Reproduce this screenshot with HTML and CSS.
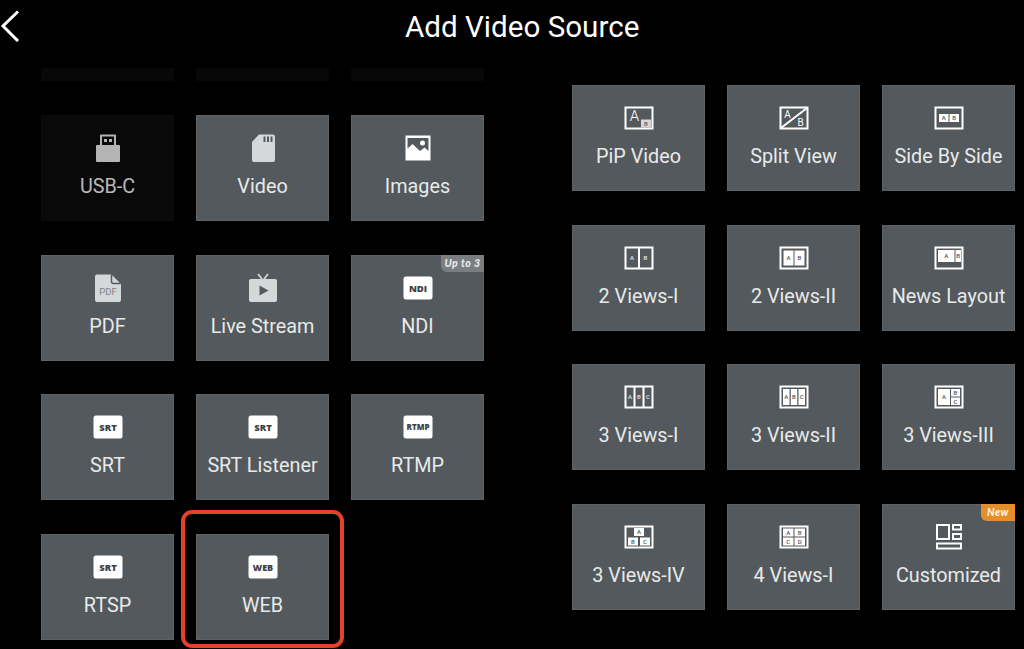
FILE: index.html
```html
<!DOCTYPE html>
<html lang="en">
<head>
<meta charset="utf-8">
<title>Add Video Source</title>
<link rel="stylesheet" href="styles.css">
</head>
<body>
<header class="top">
  <svg class="back" viewBox="0 0 20 42" aria-hidden="true"><path d="M18 11.500 3 26l15 15"/></svg>
  <h1 class="title">Add Video Source</h1>
</header>
<main class="panels">
  <section class="grid sources">
    <div class="strip"></div><div class="strip"></div><div class="strip"></div>

    <div class="card off">
      <svg class="ico" viewBox="0 0 32 30"><path class="dim" fill-rule="evenodd" d="M8 2.500a1 1 0 0 1 1-1h14a1 1 0 0 1 1 1V12h3a1 1 0 0 1 1 1v15a1 1 0 0 1-1 1H5a1 1 0 0 1-1-1V13a1 1 0 0 1 1-1h3zM10 3.500V12h12V3.500zM12 6h3v3h-3zM17 6h3v3h-3z"/></svg>
      <span class="label">USB-C</span>
    </div>
    <div class="card">
      <svg class="ico" viewBox="0 0 32 30"><path class="pale" fill-rule="evenodd" d="M12 1.500h14a2 2 0 0 1 2 2V27a2 2 0 0 1-2 2H7a2 2 0 0 1-2-2V9zM16.500 3.500v5.500h2V3.500zM20 3.500v5.500h2V3.500zM23.500 3.500v5.500h2V3.500z"/></svg>
      <span class="label">Video</span>
    </div>
    <div class="card">
      <svg class="ico" viewBox="0 0 32 30"><path class="solid" fill-rule="evenodd" d="M3.500 2.500h25v25h-25zM5.500 5v10.500l5-4.500 7.500 7 4.500-3.500 4 3.500V5z"/><circle class="solid" cx="20.500" cy="10" r="2.500"/></svg>
      <span class="label">Images</span>
    </div>

    <div class="card">
      <svg class="ico" viewBox="0 0 32 30"><path class="pale" d="M5 1.500h14.500L29 11v16a2 2 0 0 1-2 2H5a2 2 0 0 1-2-2V3.500a2 2 0 0 1 2-2z"/><path class="cut" d="M19.500 1.500v7a2 2 0 0 0 2 2h7"/><text class="glyph pdf" x="16" y="21.500">PDF</text></svg>
      <span class="label">PDF</span>
    </div>
    <div class="card">
      <svg class="ico" viewBox="0 0 32 30"><path class="pale" d="M4 6h24a2 2 0 0 1 2 2v19a2 2 0 0 1-2 2H4a2 2 0 0 1-2-2V8a2 2 0 0 1 2-2z"/><path class="ears" d="M11 1l4 5M21 1l-4 5"/><path class="play" d="M12.500 12.500v10l9-5z"/></svg>
      <span class="label">Live Stream</span>
    </div>
    <div class="card">
      <span class="badge grey">Up to 3</span>
      <svg class="ico" viewBox="0 0 32 30"><rect class="solid" x="1.500" y="3.500" width="29" height="23" rx="2.500"/><text class="glyph tag" x="16" y="18.500">NDI</text></svg>
      <span class="label">NDI</span>
    </div>

    <div class="card">
      <svg class="ico" viewBox="0 0 32 30"><rect class="solid" x="1.500" y="3.500" width="29" height="23" rx="2.500"/><text class="glyph tag" x="16" y="18.500">SRT</text></svg>
      <span class="label">SRT</span>
    </div>
    <div class="card">
      <svg class="ico" viewBox="0 0 32 30"><rect class="solid" x="1.500" y="3.500" width="29" height="23" rx="2.500"/><text class="glyph tag" x="16" y="18.500">SRT</text></svg>
      <span class="label">SRT Listener</span>
    </div>
    <div class="card">
      <svg class="ico" viewBox="0 0 32 30"><rect class="solid" x="1.500" y="3.500" width="29" height="23" rx="2.500"/><text class="glyph tag wide" x="16" y="18">RTMP</text></svg>
      <span class="label">RTMP</span>
    </div>

    <div class="card">
      <svg class="ico" viewBox="0 0 32 30"><rect class="solid" x="1.500" y="3.500" width="29" height="23" rx="2.500"/><text class="glyph tag" x="16" y="18.500">SRT</text></svg>
      <span class="label">RTSP</span>
    </div>
    <div class="card picked">
      <svg class="ico" viewBox="0 0 32 30"><rect class="solid" x="1.500" y="3.500" width="29" height="23" rx="2.500"/><text class="glyph tag mid" x="16" y="18.500">WEB</text></svg>
      <span class="label">WEB</span>
    </div>
  </section>

  <section class="grid layouts">
    <div class="card">
      <svg class="ico" viewBox="0 0 32 30"><rect class="frame" x="2.500" y="4.500" width="27" height="21"/><text class="glyph big" x="11.500" y="18">A</text><rect class="pale" x="18" y="16.500" width="10" height="8"/><text class="glyph mini" x="23" y="22.500">B</text></svg>
      <span class="label">PiP Video</span>
    </div>
    <div class="card">
      <svg class="ico" viewBox="0 0 32 30"><rect class="frame" x="2.500" y="4.500" width="27" height="21"/><path class="frame" d="M3 25 29 5"/><text class="glyph med" x="9.500" y="14.500">A</text><text class="glyph med" x="22.500" y="23">B</text></svg>
      <span class="label">Split View</span>
    </div>
    <div class="card">
      <svg class="ico" viewBox="0 0 32 30"><rect class="frame" x="2.500" y="4.500" width="27" height="21"/><rect class="solid" x="6" y="11" width="9.500" height="8"/><rect class="solid" x="16.500" y="11" width="9.500" height="8"/><text class="glyph mini" x="10.750" y="17">A</text><text class="glyph mini" x="21.250" y="17">B</text></svg>
      <span class="label">Side By Side</span>
    </div>

    <div class="card">
      <svg class="ico" viewBox="0 0 32 30"><rect class="frame" x="2.500" y="4.500" width="27" height="21"/><path class="frame" d="M16 5v20"/><text class="glyph mini lite" x="9" y="17">A</text><text class="glyph mini lite" x="22.500" y="17">B</text></svg>
      <span class="label">2 Views-I</span>
    </div>
    <div class="card">
      <svg class="ico" viewBox="0 0 32 30"><rect class="frame" x="2.500" y="4.500" width="27" height="21"/><rect class="solid" x="5.500" y="7.500" width="10" height="15"/><rect class="solid" x="16.500" y="7.500" width="10" height="15"/><text class="glyph mini" x="10.500" y="17">A</text><text class="glyph mini" x="21.500" y="17">B</text></svg>
      <span class="label">2 Views-II</span>
    </div>
    <div class="card">
      <svg class="ico" viewBox="0 0 32 30"><rect class="frame" x="2.500" y="4.500" width="27" height="21"/><rect class="solid" x="5" y="7" width="16.500" height="12"/><rect class="solid" x="22.500" y="7" width="5.500" height="12"/><text class="glyph mini" x="13.250" y="15">A</text><text class="glyph mini" x="25.250" y="15">B</text></svg>
      <span class="label">News Layout</span>
    </div>

    <div class="card">
      <svg class="ico" viewBox="0 0 32 30"><rect class="frame" x="2.500" y="4.500" width="27" height="21"/><path class="frame" d="M11.500 5v20M20.500 5v20"/><text class="glyph mini lite" x="7" y="17">A</text><text class="glyph mini lite" x="16" y="17">B</text><text class="glyph mini lite" x="25" y="17">C</text></svg>
      <span class="label">3 Views-I</span>
    </div>
    <div class="card">
      <svg class="ico" viewBox="0 0 32 30"><rect class="frame" x="2.500" y="4.500" width="27" height="21"/><rect class="solid" x="5" y="7" width="6.500" height="16"/><rect class="solid" x="12.750" y="7" width="6.500" height="16"/><rect class="solid" x="20.500" y="7" width="6.500" height="16"/><text class="glyph mini" x="8.250" y="17">A</text><text class="glyph mini" x="16" y="17">B</text><text class="glyph mini" x="23.750" y="17">C</text></svg>
      <span class="label">3 Views-II</span>
    </div>
    <div class="card">
      <svg class="ico" viewBox="0 0 32 30"><rect class="frame" x="2.500" y="4.500" width="27" height="21"/><rect class="solid" x="5" y="7" width="12" height="16"/><rect class="solid" x="18" y="7" width="9" height="7.500"/><rect class="solid" x="18" y="15.500" width="9" height="7.500"/><text class="glyph mini" x="11" y="17">A</text><text class="glyph mini" x="22.500" y="13">B</text><text class="glyph mini" x="22.500" y="21.500">C</text></svg>
      <span class="label">3 Views-III</span>
    </div>

    <div class="card">
      <svg class="ico" viewBox="0 0 32 30"><rect class="frame" x="2.500" y="4.500" width="27" height="21"/><rect class="solid" x="11" y="6" width="10" height="8"/><rect class="solid" x="5" y="15.500" width="10" height="8"/><rect class="solid" x="17" y="15.500" width="10" height="8"/><text class="glyph mini" x="16" y="12">A</text><text class="glyph mini" x="10" y="21.500">B</text><text class="glyph mini" x="22" y="21.500">C</text></svg>
      <span class="label">3 Views-IV</span>
    </div>
    <div class="card">
      <svg class="ico" viewBox="0 0 32 30"><rect class="frame" x="2.500" y="4.500" width="27" height="21"/><rect class="solid" x="5" y="6.500" width="10.500" height="8"/><rect class="solid" x="16.500" y="6.500" width="10.500" height="8"/><rect class="solid" x="5" y="15.500" width="10.500" height="8"/><rect class="solid" x="16.500" y="15.500" width="10.500" height="8"/><text class="glyph mini" x="10.250" y="12.500">A</text><text class="glyph mini" x="21.750" y="12.500">B</text><text class="glyph mini" x="10.250" y="21.500">C</text><text class="glyph mini" x="21.750" y="21.500">D</text></svg>
      <span class="label">4 Views-I</span>
    </div>
    <div class="card">
      <span class="badge orange">New</span>
      <svg class="ico" viewBox="0 0 32 30"><rect class="frame" x="4" y="3" width="12" height="14"/><rect class="frame" x="20" y="3" width="8" height="4.500"/><rect class="frame" x="20" y="12" width="8" height="5"/><rect class="frame" x="4" y="21.500" width="24" height="5"/></svg>
      <span class="label">Customized</span>
    </div>
  </section>
</main>
</body>
</html>
```

FILE: styles.css
```css
* { box-sizing: border-box; }

html, body {
  height: 100%;
}

body {
  margin: 0;
  background: #000;
  color: #fff;
  font-family: Roboto, "Liberation Sans", sans-serif;
  overflow: hidden;
}

.top {
  display: flex;
  align-items: flex-start;
  height: 68.3px;
}

.back {
  width: 20px;
  height: 42px;
  flex: none;
  fill: none;
  stroke: #fff;
  stroke-width: 3;
}

.title {
  margin: 9px 0 0 385px;
  font-size: 29.6px;
  line-height: 36px;
  font-weight: 400;
  white-space: nowrap;
}

.panels {
  display: flex;
  align-items: flex-start;
  gap: 88px;
  padding-left: 41px;
}

.grid {
  display: grid;
  grid-template-columns: repeat(3, 133px);
  grid-auto-rows: 106px;
  column-gap: 22px;
  row-gap: 33.7px;
}

.sources {
  grid-template-rows: 13px;
}

.layouts {
  margin-top: 16.8px;
}

.strip {
  background: #080808;
}

.card {
  position: relative;
  display: flex;
  flex-direction: column;
  align-items: center;
  padding-top: 18px;
  background: #54595d;
  border: 1px solid #5d6266;
}

.card.off {
  background: #090909;
  border-color: #0c0c0c;
  color: #b9b9b9;
}

.card.picked::after {
  content: "";
  position: absolute;
  top: -25px;
  left: -16px;
  right: -16px;
  bottom: -9px;
  border: 4px solid #e2412a;
  border-radius: 11px;
}

.ico {
  display: block;
  width: 32px;
  height: 30px;
  margin-top: -1px;
  flex: none;
}

.label {
  margin-top: 11px;
  font-size: 19.8px;
  line-height: 26px;
  white-space: nowrap;
  color: #e8eaea;
}

.off .label {
  color: #b9b9b9;
}

.badge {
  position: absolute;
  top: -1px;
  right: -1px;
  height: 17px;
  border-radius: 0 0 0 6px;
  font-family: Lato, Roboto, sans-serif;
  font-size: 10.5px;
  line-height: 16px;
  font-style: italic;
  font-weight: 900;
  letter-spacing: 0.5px;
  color: #e9e9e9;
}

.badge.grey {
  width: 43px;
  text-align: center;
  background: #7b7e81;
}

.badge.orange {
  width: 34px;
  text-align: center;
  background: #e58f2c;
  color: #fff3dc;
}

.solid { fill: #fff; }
.pale { fill: #d5d8d8; }
.dim { fill: #b4b4b4; }

.frame {
  fill: none;
  stroke: #fff;
  stroke-width: 2;
}

.cut {
  fill: none;
  stroke: #54595d;
  stroke-width: 1.5;
}

.ears {
  fill: none;
  stroke: #d5d8d8;
  stroke-width: 1.8;
}

.play { fill: #54595d; }

.glyph {
  font-family: Roboto, "Liberation Sans", sans-serif;
  text-anchor: middle;
}

.pdf {
  font-size: 9.500px;
  fill: #7d8184;
}

.tag {
  font-family: "Open Sans", Roboto, sans-serif;
  font-size: 9.500px;
  font-weight: 800;
  fill: #3d4144;
}

.tag.mid { font-size: 9px; }
.tag.wide { font-size: 8px; }

.big {
  font-size: 15px;
  font-weight: 300;
  fill: #fff;
}

.med {
  font-size: 10px;
  fill: #fff;
}

.mini {
  font-size: 6px;
  font-weight: 500;
  fill: #54595d;
}

.mini.lite { fill: #e4e6e6; }
```
